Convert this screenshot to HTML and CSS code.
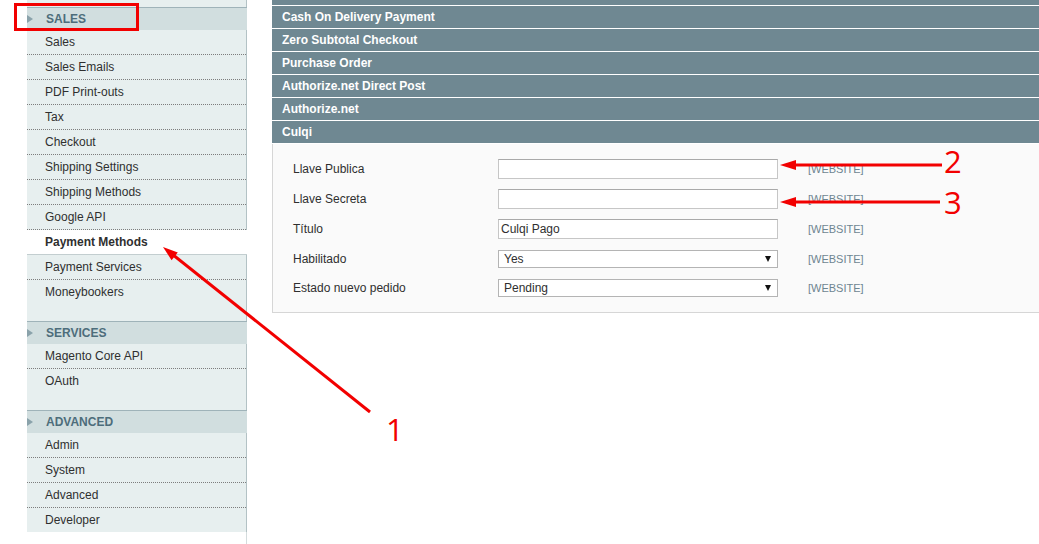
FILE: index.html
```html
<!DOCTYPE html>
<html lang="es">
<head>
    <meta charset="UTF-8">
    <meta name="viewport" content="width=device-width, initial-scale=1.0">
    <title>Configuration - Payment Methods</title>
    <link rel="stylesheet" href="styles.css">
</head>
<body>

<div class="sidebar">
    <div class="nav-tail"></div>

    <div class="nav-section">
        <div class="nav-head"><span class="nav-arrow"></span>Sales</div>
        <ul class="nav-list">
            <li>Sales</li>
            <li>Sales Emails</li>
            <li>PDF Print-outs</li>
            <li>Tax</li>
            <li>Checkout</li>
            <li>Shipping Settings</li>
            <li>Shipping Methods</li>
            <li>Google API</li>
            <li class="active">Payment Methods</li>
            <li>Payment Services</li>
            <li>Moneybookers</li>
        </ul>
    </div>

    <div class="nav-section">
        <div class="nav-head"><span class="nav-arrow"></span>Services</div>
        <ul class="nav-list">
            <li>Magento Core API</li>
            <li>OAuth</li>
        </ul>
    </div>

    <div class="nav-section last">
        <div class="nav-head"><span class="nav-arrow"></span>Advanced</div>
        <ul class="nav-list">
            <li>Admin</li>
            <li>System</li>
            <li>Advanced</li>
            <li>Developer</li>
        </ul>
    </div>

    <div class="nav-filler"></div>
</div>

<div class="main">
    <div class="band band-tail"></div>
    <div class="band">Cash On Delivery Payment</div>
    <div class="band">Zero Subtotal Checkout</div>
    <div class="band">Purchase Order</div>
    <div class="band">Authorize.net Direct Post</div>
    <div class="band">Authorize.net</div>
    <div class="band">Culqi</div>

    <div class="fieldset">
        <div class="row">
            <label class="label">Llave Publica</label>
            <input class="input" type="text" value="">
            <span class="scope">[WEBSITE]</span>
        </div>
        <div class="row">
            <label class="label">Llave Secreta</label>
            <input class="input" type="text" value="">
            <span class="scope">[WEBSITE]</span>
        </div>
        <div class="row">
            <label class="label">Título</label>
            <input class="input" type="text" value="Culqi Pago">
            <span class="scope">[WEBSITE]</span>
        </div>
        <div class="row row-select">
            <label class="label">Habilitado</label>
            <div class="select"><span>Yes</span><span class="caret"></span></div>
            <span class="scope">[WEBSITE]</span>
        </div>
        <div class="row row-select">
            <label class="label">Estado nuevo pedido</label>
            <div class="select"><span>Pending</span><span class="caret"></span></div>
            <span class="scope">[WEBSITE]</span>
        </div>
    </div>
</div>

<!-- annotations drawn over the screenshot -->
<svg class="marks" width="1039" height="544" viewBox="0 0 1039 544">
    <rect x="15.5" y="4.5" width="122" height="25" fill="none" stroke="#f20000" stroke-width="3"/>

    <line x1="172" y1="254" x2="370" y2="412" stroke="#f20000" stroke-width="3"/>
    <polygon points="163,247 171.6,260.2 177.8,252.4" fill="#f20000"/>
    <text x="386" y="441" class="mark-num">1</text>

    <line x1="793" y1="165" x2="942" y2="165" stroke="#f20000" stroke-width="3"/>
    <polygon points="780,165 796,160 796,170" fill="#f20000"/>
    <text x="944" y="173" class="mark-num">2</text>

    <line x1="793" y1="202" x2="940" y2="202" stroke="#f20000" stroke-width="3"/>
    <polygon points="780,202 796,197 796,207" fill="#f20000"/>
    <text x="944" y="214" class="mark-num">3</text>
</svg>

</body>
</html>
```

FILE: styles.css
```css
* {
    box-sizing: border-box;
    margin: 0;
    padding: 0;
}

html, body {
    height: 100%;
    overflow: hidden;
}

body {
    font-family: 'Liberation Sans', Arial, sans-serif;
    font-size: 12px;
    color: #2f2f2f;
    background: #fff;
    display: flex;
    align-items: stretch;
    position: relative;
}

/* left navigation */
.sidebar {
    width: 220px;
    margin-left: 27px;
    flex-shrink: 0;
    display: flex;
    flex-direction: column;
}

.nav-tail {
    height: 7px;
    background: #e7efef;
    border-right: 1px solid #b3c2c5;
}

.nav-head {
    height: 23px;
    border-top: 1px solid #9fb3b9;
    background: #d1dedf;
    color: #4d6d7b;
    font-weight: bold;
    text-transform: uppercase;
    display: flex;
    align-items: center;
}

.nav-arrow {
    width: 0;
    height: 0;
    border-left: 6px solid #8aa2aa;
    border-top: 4px solid transparent;
    border-bottom: 4px solid transparent;
    margin-right: 13px;
}

.nav-list {
    list-style: none;
    background: #e7efef;
    border-right: 1px solid #b3c2c5;
    padding-bottom: 17px;
}

.nav-section.last .nav-list {
    padding-bottom: 0;
}

.nav-list li {
    height: 25px;
    line-height: 23px;
    padding: 1px 0 0 18px;
    border-bottom: 1px dotted #7d7d7d;
}

.nav-list li:last-child {
    height: 24px;
    border-bottom: none;
}

.nav-list li.active {
    background: #fff;
    font-weight: bold;
    margin-right: -1px;
    border-bottom: 1px solid #c3ced0;
}

.nav-filler {
    flex: 1;
    border-right: 1px solid #d4dcdd;
}

/* main config area */
.main {
    width: 800px;
    flex-shrink: 0;
    margin-left: 25px;
}

.band {
    height: 22px;
    line-height: 22px;
    margin-bottom: 1px;
    padding-left: 10px;
    background: #6f8892;
    color: #fff;
    font-weight: bold;
}

.band-tail {
    height: 5px;
}

.band:last-of-type {
    margin-bottom: 0;
}

.fieldset {
    background: #fafafa;
    border: 1px solid #d6d6d6;
    border-top: none;
    padding: 10px 0 10px 20px;
}

.row {
    display: flex;
    align-items: center;
    height: 30px;
}

.row-select {
    height: 29px;
}

.label {
    width: 205px;
    flex-shrink: 0;
}

.input {
    width: 280px;
    height: 20px;
    border: 1px solid #c6c6c6;
    border-top-color: #a9a9a9;
    background: #fff;
    font-family: inherit;
    font-size: 12px;
    color: #2f2f2f;
    padding: 0 2px;
    outline: none;
}

.select {
    width: 280px;
    height: 18px;
    border: 1px solid #b4b4b4;
    background: #fff;
    padding: 0 5px 0 5px;
    display: flex;
    align-items: center;
    justify-content: space-between;
}

.caret {
    width: 0;
    height: 0;
    border-left: 3.5px solid transparent;
    border-right: 3.5px solid transparent;
    border-top: 6px solid #111;
    margin-right: 1px;
}

.scope {
    margin-left: 30px;
    font-size: 11px;
    color: #6e8591;
}

/* red annotations */
.marks {
    position: absolute;
    top: 0;
    left: 0;
    pointer-events: none;
}

.mark-num {
    font-family: 'Open Sans', 'DejaVu Sans', sans-serif;
    font-weight: 400;
    font-size: 31px;
    fill: #f20000;
}
```
